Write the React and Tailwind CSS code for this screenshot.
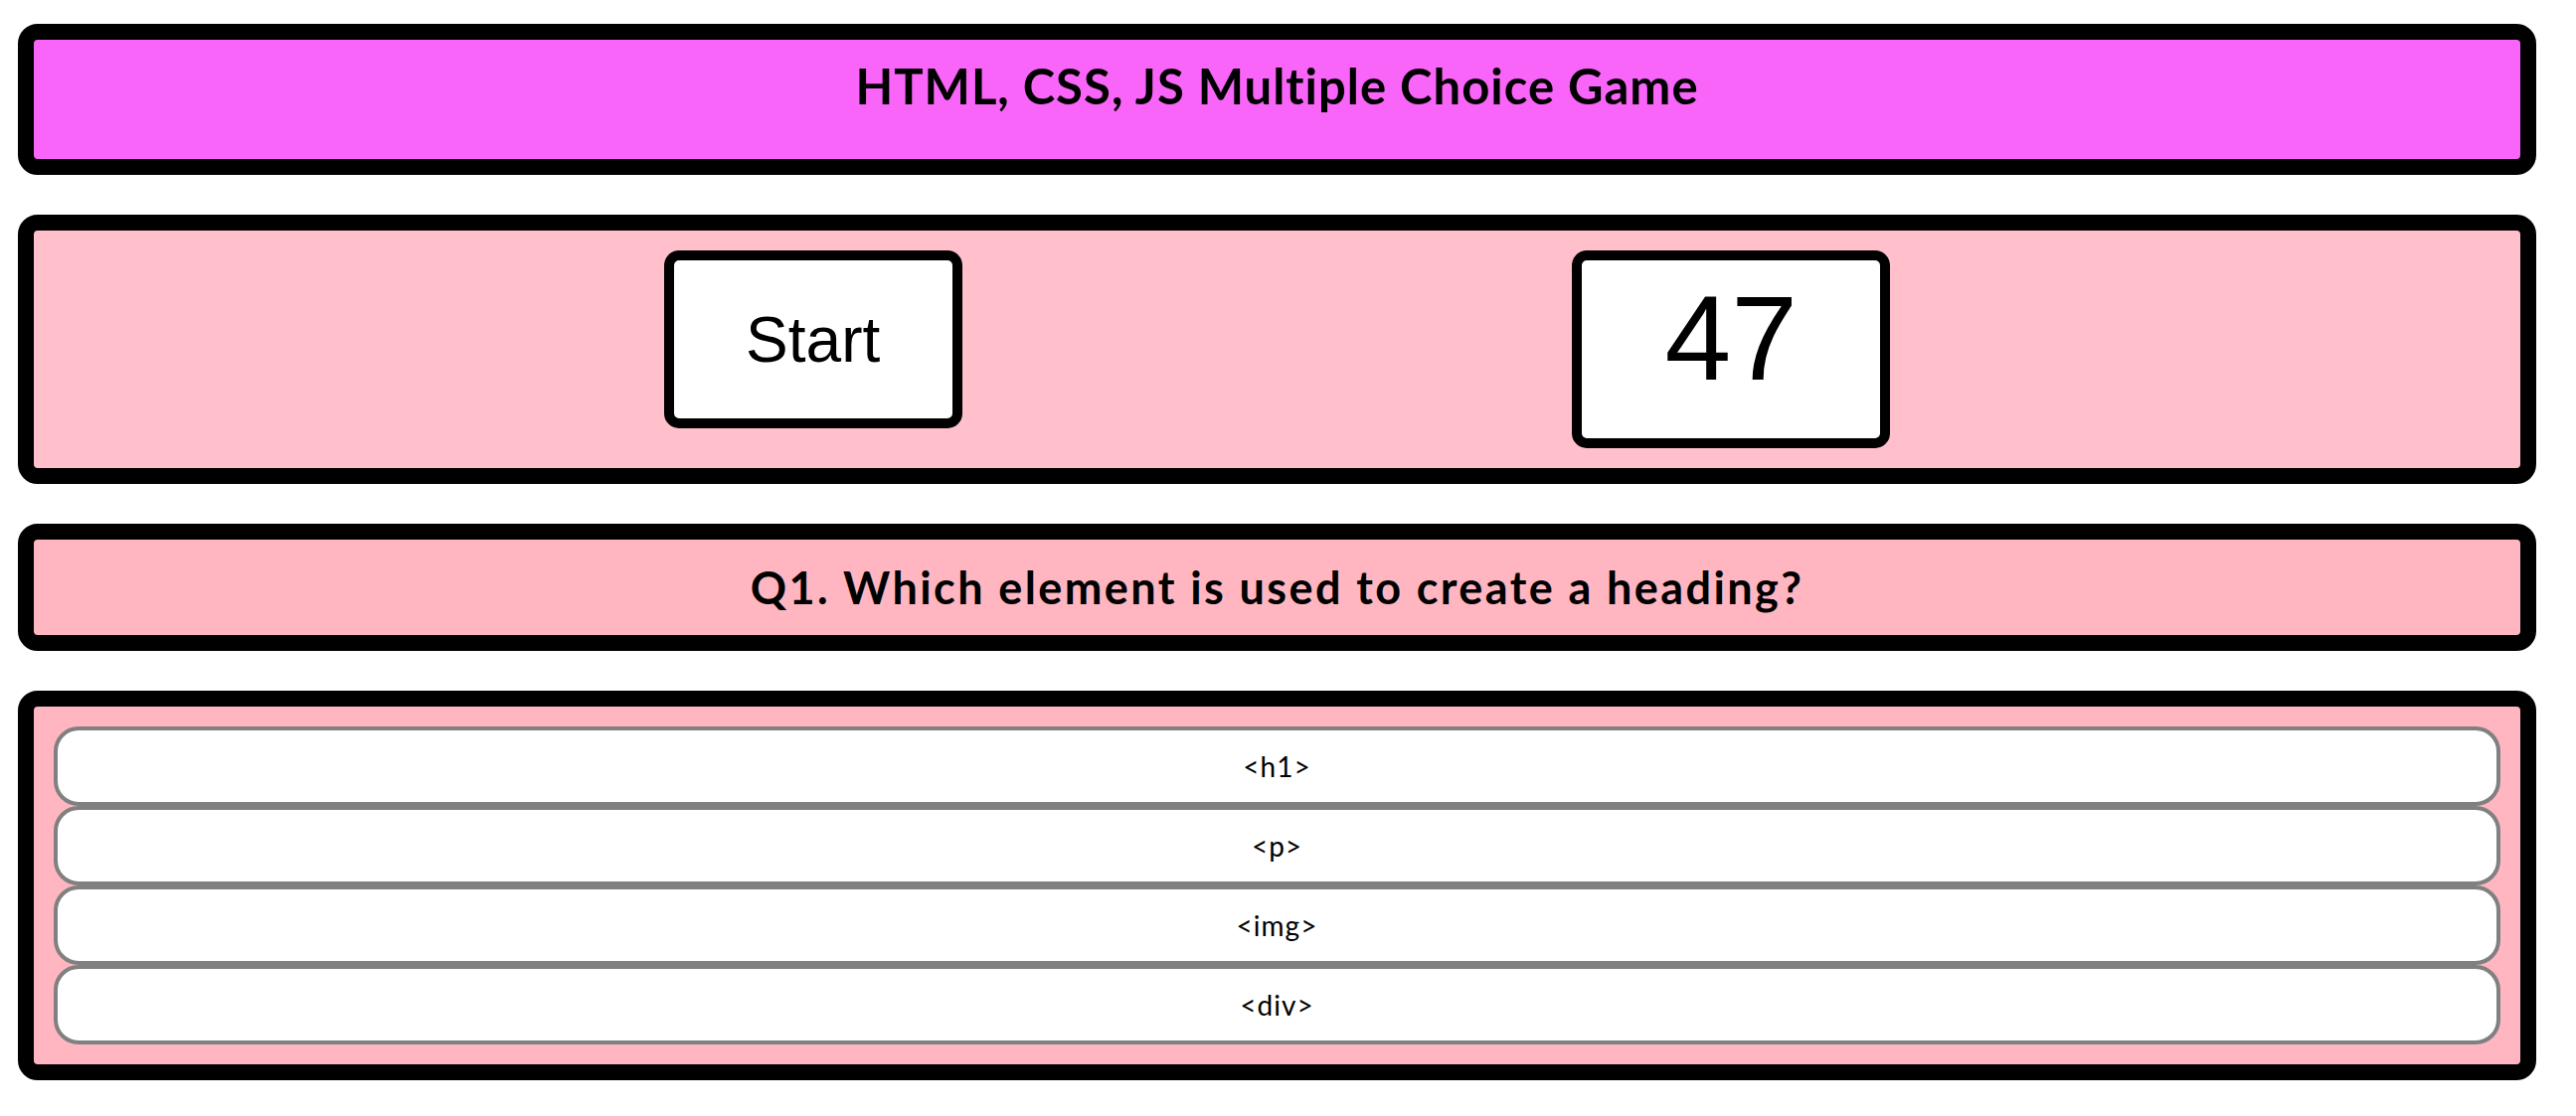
const ANSWERS = ['<h1>', '<p>', '<img>', '<div>'];

const gill = { fontFamily: '"Gill Sans", "Gill Sans MT", Lato, "Noto Sans", sans-serif' };

export default function App() {
  return (
    <div className="bg-white min-h-screen pt-[24px] pl-[18px]">
      <div className="w-[2533px] flex flex-col gap-[40px]">
        {/* Title */}
        <div className="h-[152px] border-[16px] border-black rounded-[20px] bg-[#f865f8] flex items-center justify-center">
          <h1 style={gill} className="mb-[27px] text-[49px] tracking-[1px] font-bold text-black leading-[1.2]">
            HTML, CSS, JS Multiple Choice Game
          </h1>
        </div>

        {/* Controls */}
        <div className="border-[16px] border-black rounded-[20px] bg-[#ffc0cb] p-[20px] flex items-start justify-evenly">
          <button className="w-[300px] h-[179px] border-[10px] border-black rounded-[15px] bg-white flex items-center justify-center text-[64px] text-black font-['Liberation_Sans',Arial,sans-serif]">
            Start
          </button>
          <div className="w-[320px] h-[199px] border-[10px] border-black rounded-[15px] bg-white flex justify-center pt-[9px] text-[120px] leading-[1.15] text-black font-['Liberation_Sans',Arial,sans-serif]">
            47
          </div>
        </div>

        {/* Question */}
        <div className="h-[128px] border-[16px] border-black rounded-[20px] bg-[#ffb6c1] flex items-center justify-center">
          <h2 style={gill} className="text-[45px] tracking-[2.4px] font-bold text-black leading-[1.2]">
            Q1. Which element is used to create a heading?
          </h2>
        </div>

        {/* Answers */}
        <div className="border-[16px] border-black rounded-[20px] bg-[#ffb6c1] p-[20px] flex flex-col">
          {ANSWERS.map((a) => (
            <button
              key={a}
              style={gill}
              className="h-[80px] w-full border-4 border-[#808080] rounded-[25px] bg-white flex items-center justify-center text-[28px] tracking-[1px] text-black"
            >
              {a}
            </button>
          ))}
        </div>
      </div>
    </div>
  );
}
